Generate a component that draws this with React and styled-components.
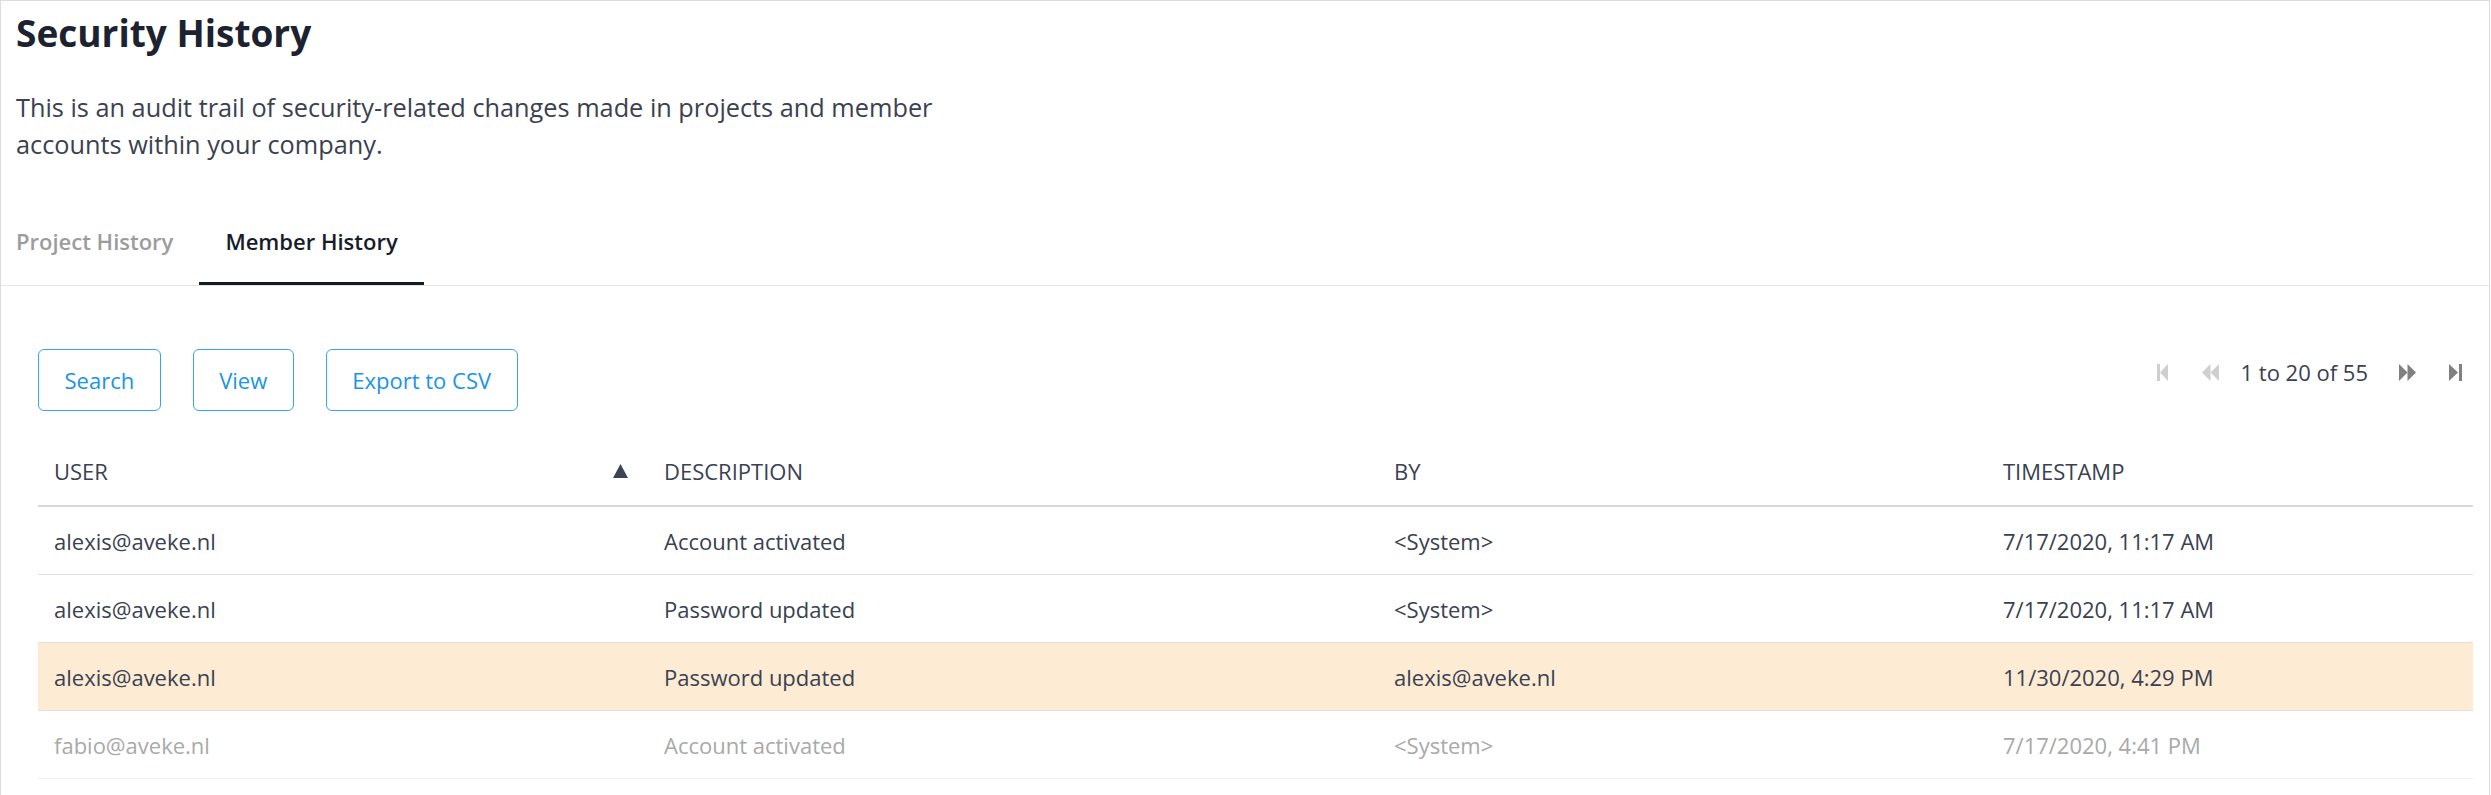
import styled, { createGlobalStyle } from "styled-components"

const GlobalStyle = createGlobalStyle`
  body {
    margin: 0;
    background: #ffffff;
    font-family: "Open Sans", "Liberation Sans", sans-serif;
  }
`;

const columns = "610px 730px 609px 1fr";

const Page = styled.div`
  margin-right: 1px;
  min-height: 794px;
  border: 1px solid #dcdcdc;
  border-bottom: none;
`;

const Header = styled.header`
  padding: 9px 15px 0;
`;

const Title = styled.h1`
  margin: 0;
  font-size: 37px;
  line-height: 45px;
  font-weight: 700;
  color: #1c2230;
`;

const Intro = styled.p`
  margin: 33.5px 0 0;
  max-width: 940px;
  font-size: 25.3px;
  line-height: 37.5px;
  color: #3b4150;
`;

const TabBar = styled.nav`
  display: flex;
  margin-top: 36px;
  padding-left: 15px;
  border-bottom: 1px solid #e6e6e6;
`;

const Tab = styled.div`
  padding: 26px 26px 26.5px;
  font-size: 22px;
  line-height: 30px;
  font-weight: 600;
  color: ${p => (p.$active ? "#161c2b" : "#9c9c9c")};
  border-bottom: 3px solid ${p => (p.$active ? "#141a28" : "transparent")};
  &:first-child {
    padding-left: 0;
  }
`;

const Content = styled.section`
  padding: 63px 16px 0 37px;
`;

const Toolbar = styled.div`
  display: flex;
  justify-content: space-between;
  align-items: flex-start;
`;

const Actions = styled.div`
  display: flex;
  gap: 32px;
`;

const ActionButton = styled.button`
  height: 62px;
  padding: 0 25.5px;
  border: 1px solid #3aa3ea;
  border-radius: 6px;
  background: #ffffff;
  color: #1a94e6;
  font-family: inherit;
  font-size: 22px;
`;

const Pager = styled.div`
  display: flex;
  align-items: center;
  gap: 12px;
  height: 30px;
  margin-top: 8px;
`;

const PageButton = styled.button`
  width: 36px;
  height: 30px;
  display: flex;
  align-items: center;
  justify-content: center;
  padding: 0;
  border: none;
  background: none;
  color: ${p => (p.$disabled ? "#cfcfcf" : "#808080")};
`;

const PageText = styled.span`
  margin-right: 9px;
  font-size: 22px;
  line-height: 30px;
  color: #3b4150;
`;

const Table = styled.div`
  margin-top: 26px;
`;

const HeadRow = styled.div`
  display: grid;
  grid-template-columns: ${columns};
  align-items: center;
  height: 68px;
  border-bottom: 2px solid #d9d9d9;
`;

const HeadCell = styled.div`
  display: flex;
  justify-content: space-between;
  align-items: center;
  padding: 0 ${p => (p.$sorted ? "20px" : "16px")} 0 16px;
  font-size: 22px;
  text-transform: uppercase;
  color: #3a4152;
`;

const Row = styled.div`
  display: grid;
  grid-template-columns: ${columns};
  align-items: center;
  height: 67px;
  border-bottom: 1px solid ${p => (p.$faded ? "#f1f1f1" : "#e0e0e0")};
  background: ${p => (p.$highlight ? "#fdebd4" : "transparent")};
  color: ${p => (p.$faded ? "#a9a9a9" : "#3a4150")};
`;

const Cell = styled.div`
  padding: 0 16px;
  font-size: 22px;
  white-space: nowrap;
`;

const FirstIcon = () => (
  <svg width="11" height="17" viewBox="0 0 11 17" fill="currentColor">
    <rect x="0" y="0" width="3" height="17" />
    <polygon points="11,0 3,8.5 11,17" />
  </svg>
);

const PrevIcon = () => (
  <svg width="17" height="17" viewBox="0 0 17 17" fill="currentColor">
    <polygon points="8.5,0 0,8.5 8.5,17" />
    <polygon points="17,0 8.5,8.5 17,17" />
  </svg>
);

const NextIcon = () => (
  <svg width="17" height="17" viewBox="0 0 17 17" fill="currentColor">
    <polygon points="0,0 8.5,8.5 0,17" />
    <polygon points="8.5,0 17,8.5 8.5,17" />
  </svg>
);

const LastIcon = () => (
  <svg width="13" height="17" viewBox="0 0 13 17" fill="currentColor">
    <polygon points="0,0 9,8.5 0,17" />
    <rect x="10" y="0" width="3" height="17" />
  </svg>
);

const SortUp = () => (
  <svg width="15" height="14" viewBox="0 0 15 14">
    <polygon points="7.5,0 15,14 0,14" fill="#3b4456" />
  </svg>
);

const rows = [
  { user: "alexis@aveke.nl", desc: "Account activated", by: "<System>", time: "7/17/2020, 11:17 AM" },
  { user: "alexis@aveke.nl", desc: "Password updated", by: "<System>", time: "7/17/2020, 11:17 AM" },
  { user: "alexis@aveke.nl", desc: "Password updated", by: "alexis@aveke.nl", time: "11/30/2020, 4:29 PM", highlight: true },
  { user: "fabio@aveke.nl", desc: "Account activated", by: "<System>", time: "7/17/2020, 4:41 PM", faded: true },
];

export default function App() {
  return (
    <>
      <GlobalStyle />
      <Page>
        <Header>
          <Title>Security History</Title>
          <Intro>
            This is an audit trail of security-related changes made in projects and member
            accounts within your company.
          </Intro>
        </Header>
        <TabBar>
          <Tab>Project History</Tab>
          <Tab $active>Member History</Tab>
        </TabBar>
        <Content>
          <Toolbar>
            <Actions>
              <ActionButton>Search</ActionButton>
              <ActionButton>View</ActionButton>
              <ActionButton>Export to CSV</ActionButton>
            </Actions>
            <Pager>
              <PageButton $disabled><FirstIcon /></PageButton>
              <PageButton $disabled><PrevIcon /></PageButton>
              <PageText>1 to 20 of 55</PageText>
              <PageButton><NextIcon /></PageButton>
              <PageButton><LastIcon /></PageButton>
            </Pager>
          </Toolbar>
          <Table>
            <HeadRow>
              <HeadCell $sorted>User <SortUp /></HeadCell>
              <HeadCell>Description</HeadCell>
              <HeadCell>By</HeadCell>
              <HeadCell>Timestamp</HeadCell>
            </HeadRow>
            {rows.map((r, i) => (
              <Row key={i} $highlight={r.highlight} $faded={r.faded}>
                <Cell>{r.user}</Cell>
                <Cell>{r.desc}</Cell>
                <Cell>{r.by}</Cell>
                <Cell>{r.time}</Cell>
              </Row>
            ))}
          </Table>
        </Content>
      </Page>
    </>
  );
}
